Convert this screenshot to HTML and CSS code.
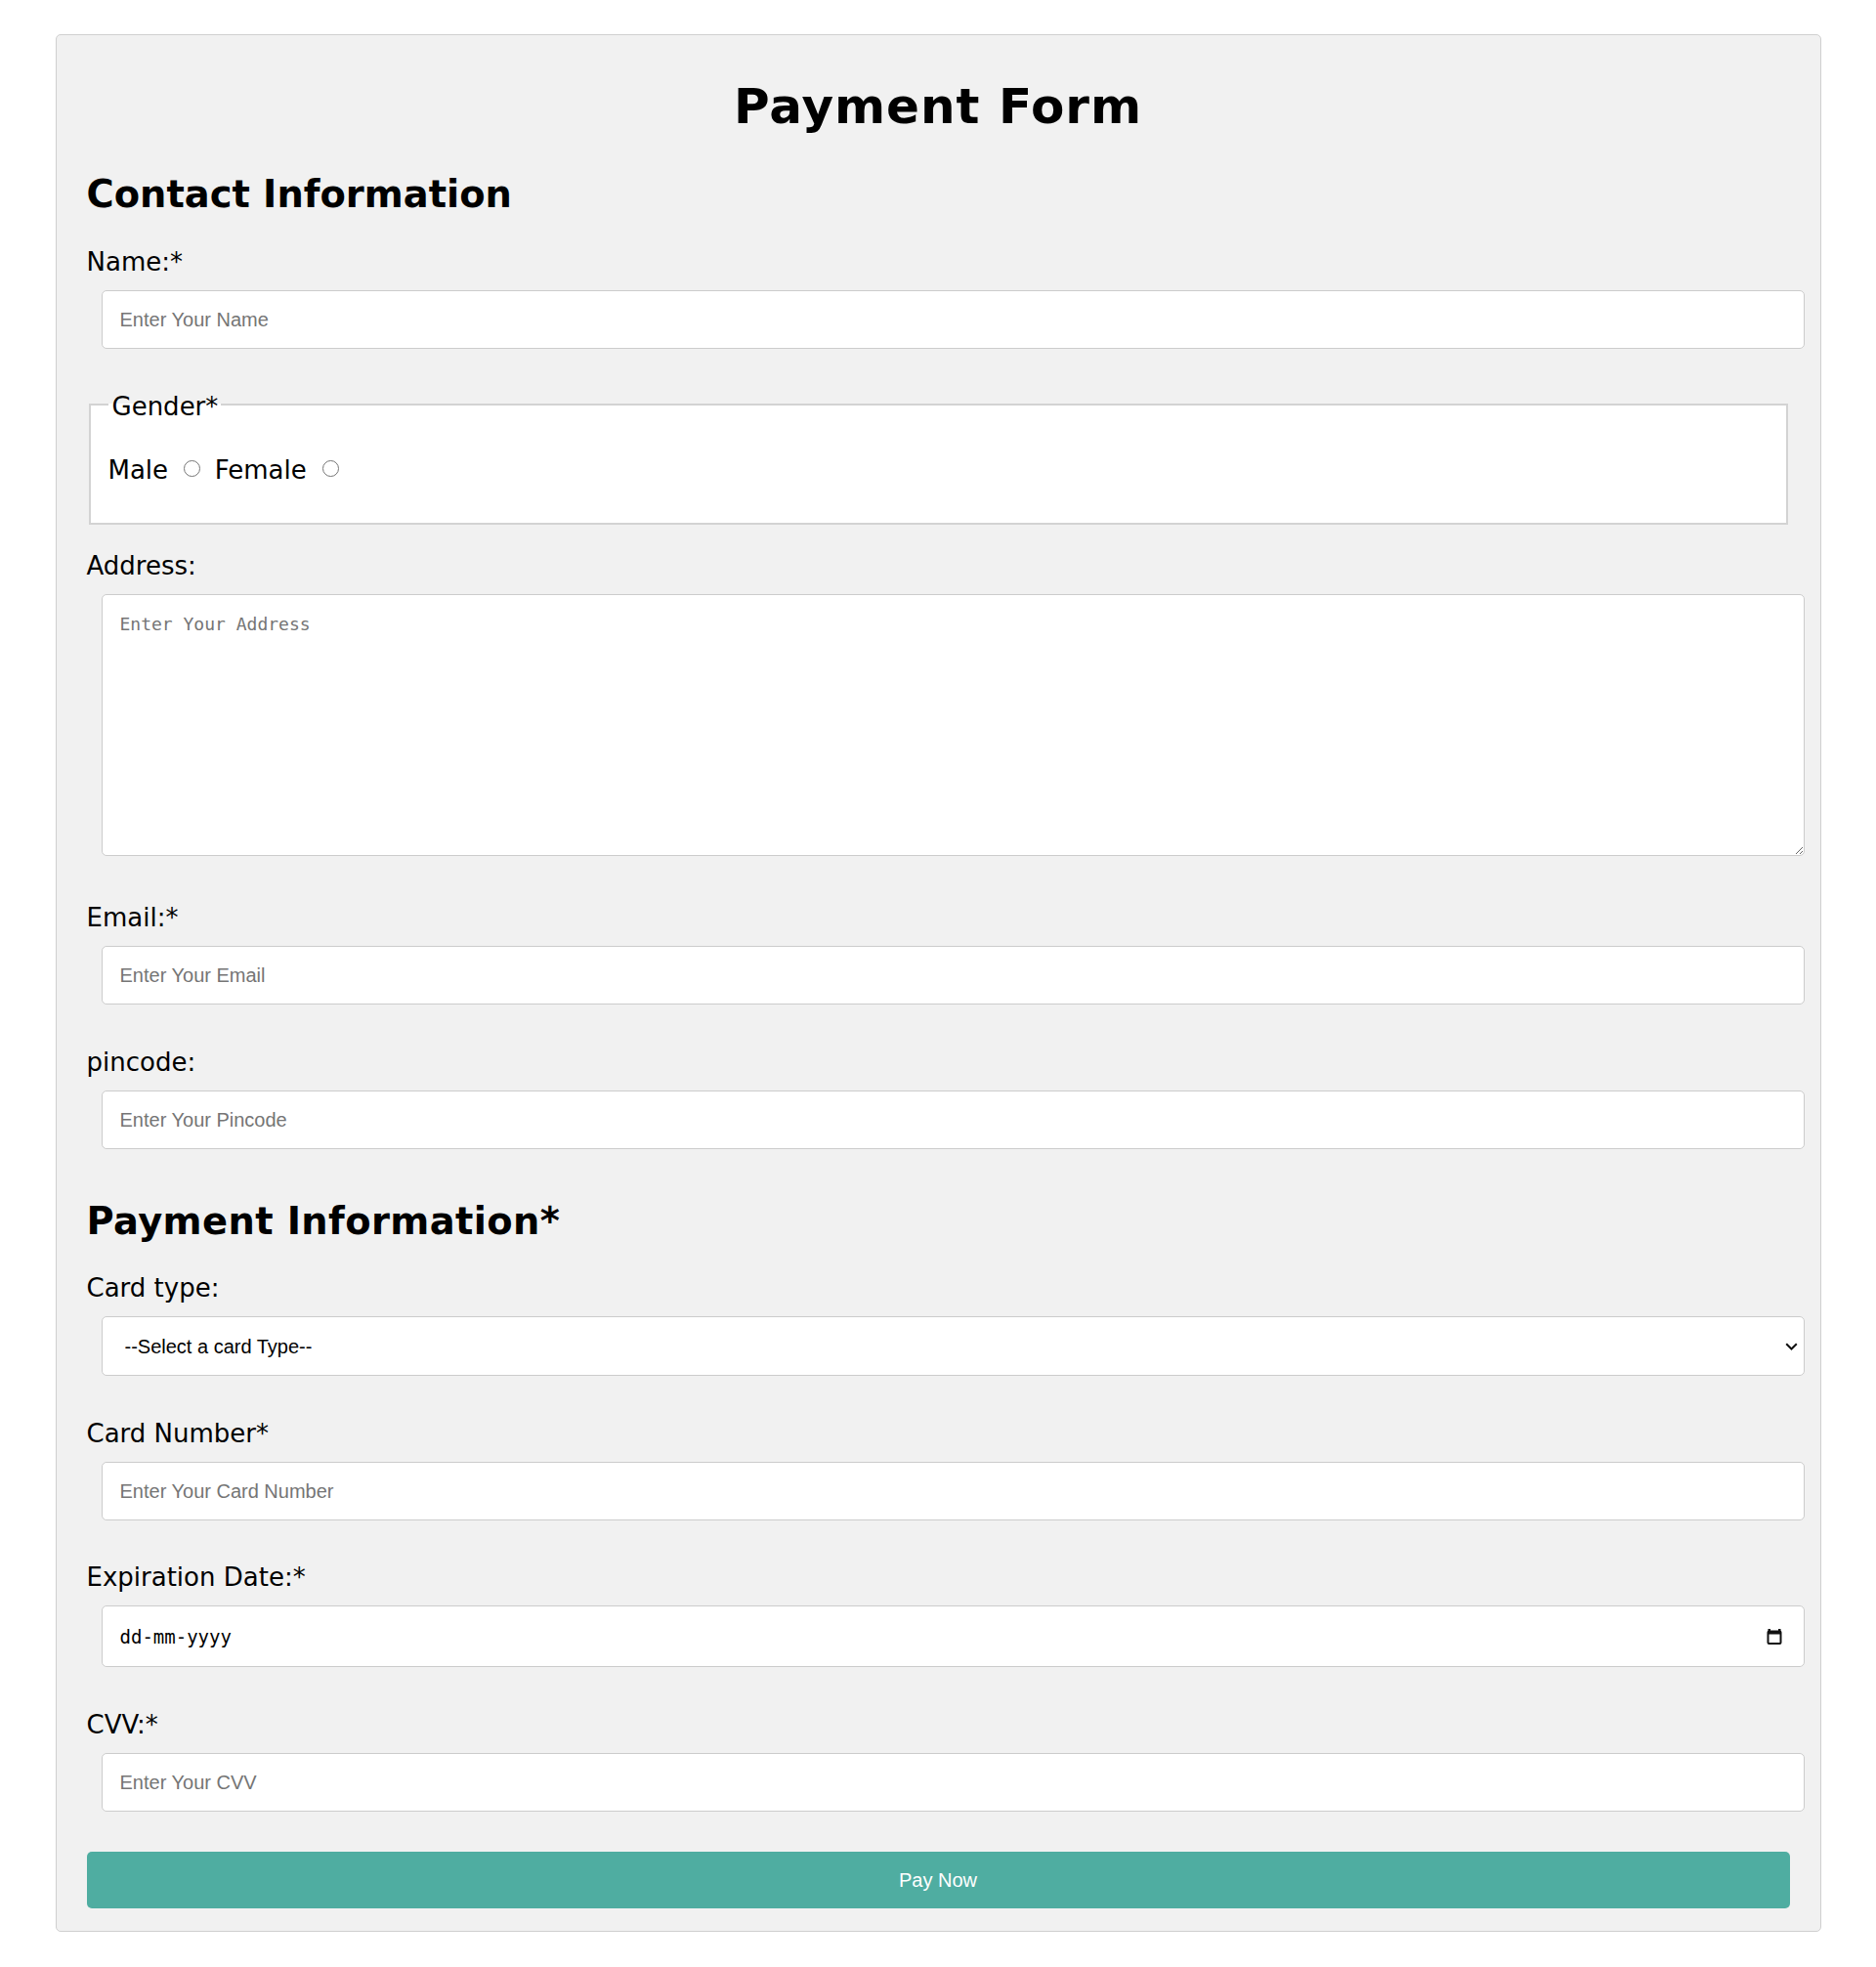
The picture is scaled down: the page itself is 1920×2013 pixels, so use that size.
FILE: index.html
```html
<!DOCTYPE html>
<html lang="en">
<head>
<meta charset="utf-8">
<title>Payment Form</title>
<link rel="stylesheet" href="styles.css">
</head>
<body>
<div class="container">
  <h1 class="title">Payment Form</h1>
  <form class="form">
    <h2 class="section-title">Contact Information</h2>

    <div class="field field-first">
      <label class="field-label" for="name">Name:*</label>
      <input class="control" type="text" id="name" placeholder="Enter Your Name">
    </div>

    <fieldset class="gender">
      <legend class="gender-legend">Gender*</legend>
      <div class="radios">
        <label for="male">Male</label> <input class="radio" type="radio" name="gender" id="male"> <label for="female">Female</label> <input class="radio" type="radio" name="gender" id="female">
      </div>
    </fieldset>

    <div class="field field-address">
      <label class="field-label" for="address">Address:</label>
      <textarea class="control textarea" id="address" placeholder="Enter Your Address"></textarea>
    </div>

    <div class="field field-email">
      <label class="field-label" for="email">Email:*</label>
      <input class="control" type="email" id="email" placeholder="Enter Your Email">
    </div>

    <div class="field">
      <label class="field-label" for="pincode">pincode:</label>
      <input class="control" type="text" id="pincode" placeholder="Enter Your Pincode">
    </div>

    <h2 class="section-title section-payment">Payment Information*</h2>

    <div class="field field-first-pay">
      <label class="field-label" for="cardtype">Card type:</label>
      <div class="select-wrap">
        <select class="select" id="cardtype">
          <option>--Select a card Type--</option>
          <option>Visa</option>
          <option>MasterCard</option>
          <option>Rupay</option>
        </select>
        <svg class="chevron" width="13" height="8" viewBox="0 0 13 8" aria-hidden="true"><path d="M1.2 1.2 L6.5 6.5 L11.8 1.2" fill="none" stroke="#111" stroke-width="2"/></svg>
      </div>
    </div>

    <div class="field">
      <label class="field-label" for="cardnum">Card Number*</label>
      <input class="control" type="text" id="cardnum" placeholder="Enter Your Card Number">
    </div>

    <div class="field field-tight">
      <label class="field-label" for="exp">Expiration Date:*</label>
      <div class="date-wrap">
        <input class="control date" type="text" id="exp" placeholder="dd-mm-yyyy">
        <svg class="calendar" width="16" height="17" viewBox="0 0 16 17" aria-hidden="true">
          <rect x="1.5" y="3.5" width="13" height="12.5" rx="1" fill="none" stroke="#111" stroke-width="2"/>
          <rect x="1.5" y="3" width="13" height="3.5" fill="#111"/>
          <rect x="1.5" y="1" width="2.5" height="3" fill="#111"/>
          <rect x="12" y="1" width="2.5" height="3" fill="#111"/>
        </svg>
      </div>
    </div>

    <div class="field">
      <label class="field-label" for="cvv">CVV:*</label>
      <input class="control" type="text" id="cvv" placeholder="Enter Your CVV">
    </div>

    <button class="pay" type="button">Pay Now</button>
  </form>
</div>
</body>
</html>
```

FILE: styles.css
```css
* {
  box-sizing: border-box;
}

body {
  margin: 0;
  background: #ffffff;
  color: #000000;
  font-family: "DejaVu Sans", Verdana, sans-serif;
}

.container {
  width: 1807px;
  margin: 35px auto 36px;
  padding: 31px 31px 23px;
  background: #f1f1f1;
  border: 1px solid #cfcfcf;
  border-radius: 5px;
}

.title {
  margin: 12px 0 0;
  font-size: 50px;
  line-height: 60px;
  font-weight: bold;
  letter-spacing: 1px;
  text-align: center;
}

.form {
  margin: 0;
}

.section-title {
  margin: 37px 0 0;
  font-size: 38.4px;
  line-height: 45px;
  font-weight: bold;
}

.section-payment {
  margin-top: 51px;
  letter-spacing: 0.4px;
}

.field {
  margin-top: 44px;
}

.field-tight {
  margin-top: 43px;
}

.field-first {
  margin-top: 32px;
}

.field-first-pay {
  margin-top: 31px;
}

.field-address {
  margin-top: 27px;
}

.field-email {
  margin-top: 48px;
}

.field-label {
  display: block;
  font-size: 26px;
  line-height: 30px;
}

.control {
  display: block;
  width: 100%;
  height: 60px;
  margin: 14px 0 0 15px;
  padding: 0 18px;
  border: 1px solid #cccccc;
  border-radius: 5px;
  background: #ffffff;
  color: #000000;
  font-family: "Liberation Sans", Arial, sans-serif;
  font-size: 20px;
  outline: none;
}

.control::placeholder {
  color: #757575;
  opacity: 1;
}

.textarea {
  height: 268px;
  padding: 19px 18px;
  font-family: "DejaVu Sans Mono", "Liberation Mono", monospace;
  font-size: 18px;
  resize: both;
}

.gender {
  margin: 40px 2px 0 2px;
  padding: 35px 18px 39px;
  border: 2px solid #d3d3d3;
  background: #ffffff;
  min-width: 0;
}

.gender-legend {
  padding: 4px 3px 0 4px;
  font-size: 26px;
  line-height: 30px;
}

.radios {
  font-size: 26px;
  line-height: 30px;
}

.radio {
  appearance: none;
  -webkit-appearance: none;
  width: 17px;
  height: 17px;
  margin: 0 6px 2px 8px;
  border: 1px solid #767676;
  border-radius: 50%;
  background: #ffffff;
  vertical-align: baseline;
}

.select-wrap,
.date-wrap {
  position: relative;
  width: 100%;
  margin: 14px 0 0 15px;
}

.select {
  display: block;
  width: 100%;
  height: 61px;
  padding: 0 40px 0 23px;
  appearance: none;
  -webkit-appearance: none;
  border: 1px solid #cccccc;
  border-radius: 5px;
  background: #ffffff;
  color: #000000;
  font-family: "Liberation Sans", Arial, sans-serif;
  font-size: 20px;
  outline: none;
}

.chevron {
  position: absolute;
  right: 7px;
  top: 27px;
}

.date {
  height: 63px;
  margin: 0;
  font-family: "DejaVu Sans Mono", "Liberation Mono", monospace;
  font-size: 19px;
}

.date::placeholder {
  color: #000000;
}

.calendar {
  position: absolute;
  right: 23px;
  top: 23px;
}

.pay {
  display: block;
  width: 100%;
  height: 58px;
  margin-top: 41px;
  border: none;
  border-radius: 5px;
  background: #4fada1;
  color: #ffffff;
  font-family: "Liberation Sans", Arial, sans-serif;
  font-size: 20px;
  cursor: pointer;
}
```
